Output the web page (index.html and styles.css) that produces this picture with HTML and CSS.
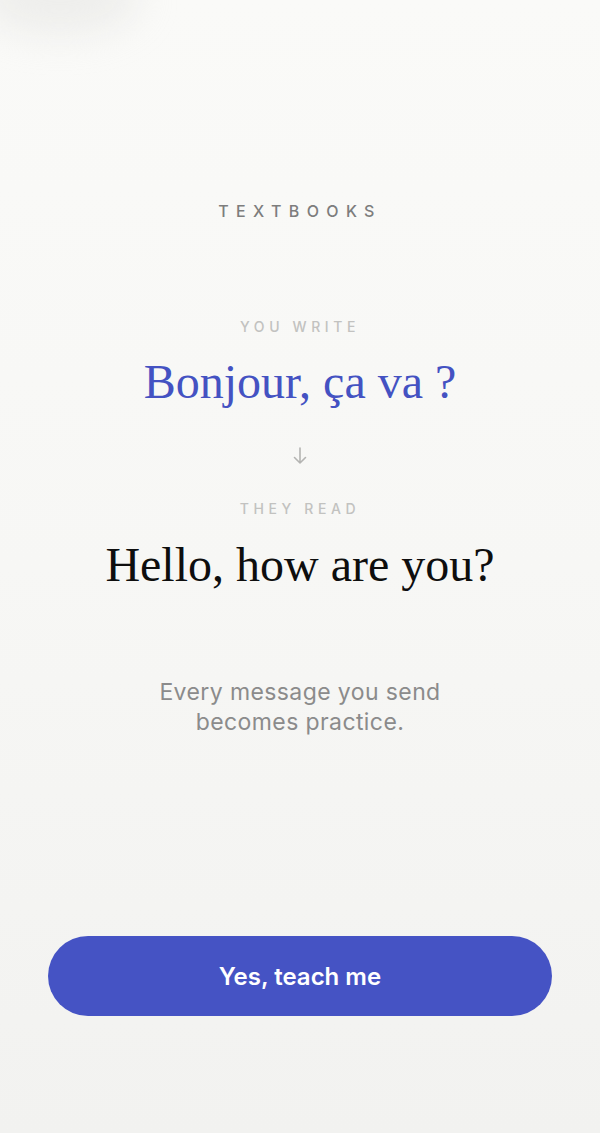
FILE: index.html
```html
<!DOCTYPE html>
<html lang="en">
<head>
<meta charset="utf-8">
<title>Textbooks</title>
<link rel="stylesheet" href="styles.css">
</head>
<body>
<main class="screen">
  <div class="blob"></div>
  <section class="content">
    <h2 class="brand">TEXTBOOKS</h2>
    <div class="label label-write">YOU WRITE</div>
    <div class="phrase phrase-fr">Bonjour, ça va ?</div>
    <div class="arrow">
      <svg width="16" height="20" viewBox="0 0 16 20" fill="none" stroke="#b4b4b2" stroke-width="1.6" stroke-linecap="round" stroke-linejoin="round"><path d="M8 2v15M2.5 11.5L8 17l5.5-5.5"/></svg>
    </div>
    <div class="label label-read">THEY READ</div>
    <div class="phrase phrase-en">Hello, how are you?</div>
    <p class="tagline">Every message you send<br>becomes practice.</p>
  </section>
  <div class="actions">
    <button class="cta">Yes, teach me</button>
  </div>
</main>
</body>
</html>
```
FILE: styles.css
```css
html, body {
  margin: 0;
  padding: 0;
}
body {
  background: linear-gradient(180deg, #fafaf8 0%, #f7f7f5 50%, #f2f2f0 100%);
  font-family: "Inter", "Liberation Sans", sans-serif;
}
.screen {
  position: relative;
  height: 1133px;
  display: flex;
  flex-direction: column;
  overflow: hidden;
}
.blob {
  position: absolute;
  left: -20px;
  top: -40px;
  width: 160px;
  height: 75px;
  border-radius: 50%;
  background: rgba(225, 225, 222, 0.45);
  filter: blur(18px);
}
.content {
  display: flex;
  flex-direction: column;
  align-items: center;
  text-align: center;
  padding-top: 201px;
  flex: 1;
}
.brand {
  margin: 0;
  font-size: 16px;
  line-height: 20px;
  font-weight: 500;
  letter-spacing: 0.46em;
  color: #7d7d7d;
}
.label {
  font-size: 14px;
  line-height: 18px;
  font-weight: 500;
  letter-spacing: 0.33em;
  color: #c2c2c0;
}
.label-write {
  margin-top: 97px;
}
.phrase {
  font-family: "Liberation Serif", "DejaVu Serif", serif;
  font-size: 48px;
  line-height: 56px;
}
.phrase-fr {
  color: #4452c2;
  margin-top: 18px;
}
.arrow {
  margin-top: 36px;
  height: 20px;
}
.label-read {
  margin-top: 34px;
}
.phrase-en {
  color: #0e0e0e;
  margin-top: 19px;
}
.tagline {
  margin: 84px 0 0;
  font-size: 23px;
  line-height: 30px;
  letter-spacing: 0.4px;
  color: #8b8b8b;
}
.actions {
  padding: 0 48px 117px;
}
.cta {
  display: block;
  width: 100%;
  height: 80px;
  border: none;
  border-radius: 40px;
  background: #4553c4;
  color: #ffffff;
  font-family: "Inter", "Liberation Sans", sans-serif;
  font-size: 24px;
  font-weight: 600;
}
```
